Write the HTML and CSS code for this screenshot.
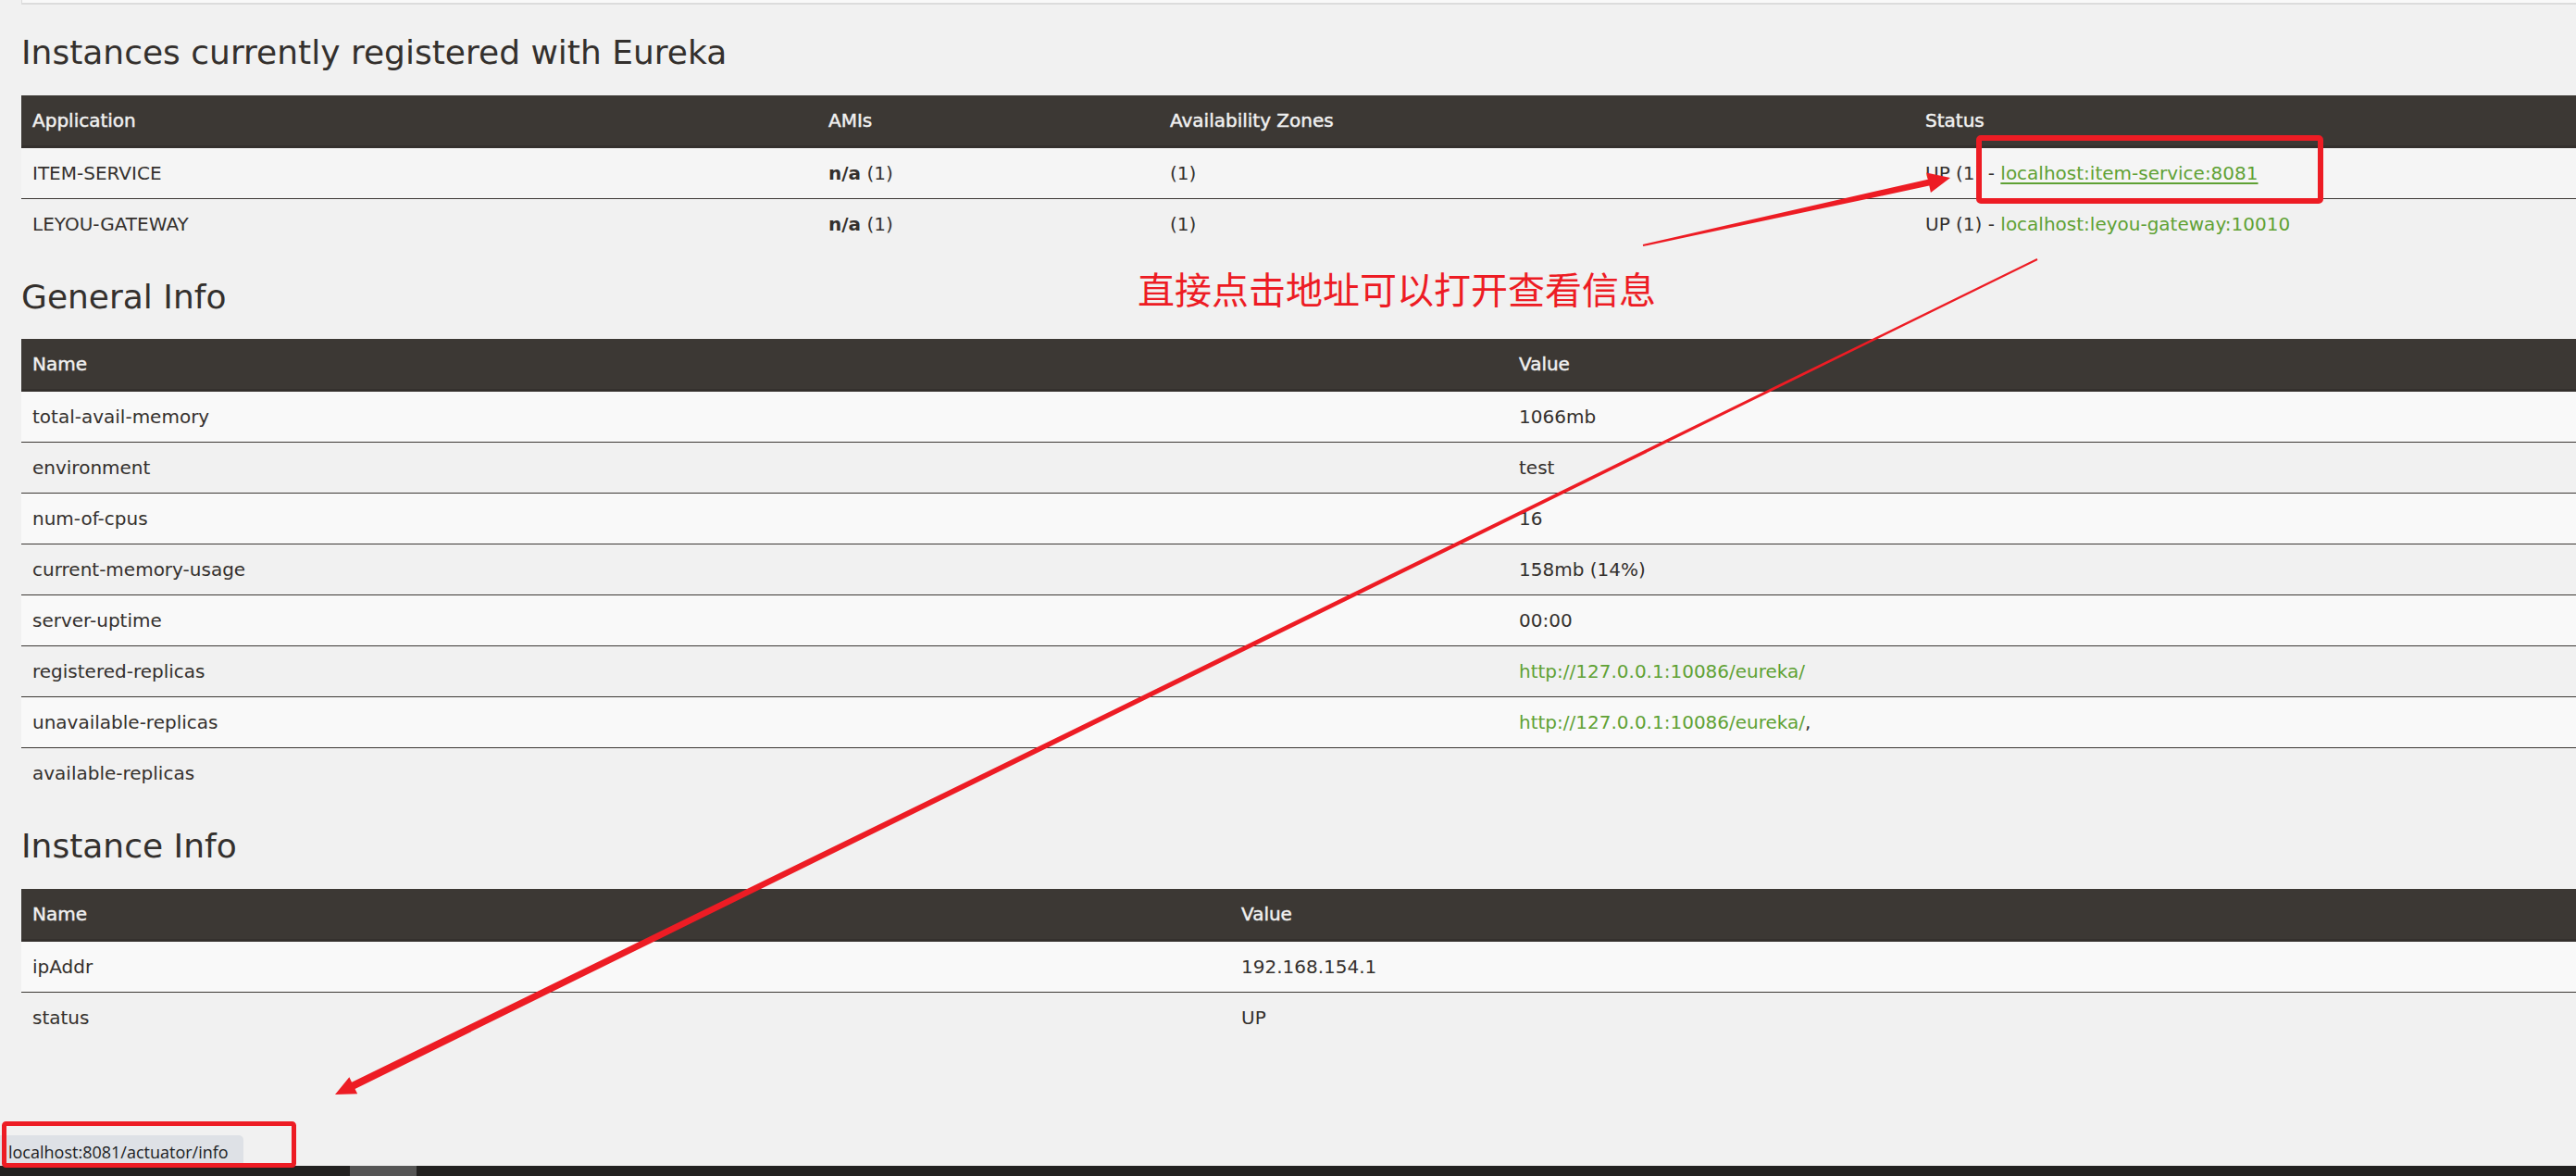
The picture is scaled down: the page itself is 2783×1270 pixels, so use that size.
FILE: index.html
```html
<!DOCTYPE html>
<html lang="en">
<head>
<meta charset="utf-8">
<title>Eureka</title>
<link rel="stylesheet" href="styles.css">
</head>
<body>
<div class="page">
  <div class="topbox"></div>

  <h2 class="section-title">Instances currently registered with Eureka</h2>
  <table class="grid">
    <colgroup>
      <col class="c-app"><col class="c-ami"><col class="c-zone"><col class="c-status">
    </colgroup>
    <thead>
      <tr><th>Application</th><th>AMIs</th><th>Availability Zones</th><th>Status</th></tr>
    </thead>
    <tbody>
      <tr class="hovered">
        <td>ITEM-SERVICE</td>
        <td><b>n/a</b> (1)</td>
        <td>(1)</td>
        <td>UP (1) - <a class="link underline" href="#">localhost:item-service:8081</a></td>
      </tr>
      <tr>
        <td>LEYOU-GATEWAY</td>
        <td><b>n/a</b> (1)</td>
        <td>(1)</td>
        <td>UP (1) - <a class="link" href="#">localhost:leyou-gateway:10010</a></td>
      </tr>
    </tbody>
  </table>

  <h2 class="section-title">General Info</h2>
  <table class="grid">
    <colgroup>
      <col class="c-gname"><col>
    </colgroup>
    <thead>
      <tr><th>Name</th><th>Value</th></tr>
    </thead>
    <tbody>
      <tr><td>total-avail-memory</td><td>1066mb</td></tr>
      <tr><td>environment</td><td>test</td></tr>
      <tr><td>num-of-cpus</td><td>16</td></tr>
      <tr><td>current-memory-usage</td><td>158mb (14%)</td></tr>
      <tr><td>server-uptime</td><td>00:00</td></tr>
      <tr><td>registered-replicas</td><td><a class="link" href="#">http://127.0.0.1:10086/eureka/</a></td></tr>
      <tr><td>unavailable-replicas</td><td><a class="link" href="#">http://127.0.0.1:10086/eureka/</a>,</td></tr>
      <tr><td>available-replicas</td><td></td></tr>
    </tbody>
  </table>

  <h2 class="section-title">Instance Info</h2>
  <table class="grid">
    <colgroup>
      <col class="c-iname"><col>
    </colgroup>
    <thead>
      <tr><th>Name</th><th>Value</th></tr>
    </thead>
    <tbody>
      <tr><td>ipAddr</td><td>192.168.154.1</td></tr>
      <tr><td>status</td><td>UP</td></tr>
    </tbody>
  </table>
</div>

<div class="annotation">直接点击地址可以打开查看信息</div>

<div class="status-bubble">localhost:8081/actuator/info</div>
<div class="hscroll"><div class="hscroll-thumb"></div></div>

<svg class="markup" width="2783" height="1270" viewBox="0 0 2783 1270" xmlns="http://www.w3.org/2000/svg">
  <rect x="2138" y="149" width="369" height="68" rx="2" fill="none" stroke="#ed1c24" stroke-width="6"/>
  <rect x="4.5" y="1213.5" width="313" height="45" rx="2" fill="none" stroke="#ed1c24" stroke-width="5"/>
  <polygon fill="#ed1c24" points="1774.8,264 2082.8,193.7 2081.2,186.4 2107,192 2085.9,207.9 2084.3,200.6 1775.2,266"/>
  <polygon fill="#ed1c24" points="2200.56,279.1 379.99,1168.72 377.35,1163.33 362,1182 386.15,1181.29 383.51,1175.9 2201.44,280.9"/>
</svg>
</body>
</html>
```

FILE: styles.css
```css
html, body {
  margin: 0;
  padding: 0;
}

body {
  position: relative;
  width: 2783px;
  height: 1270px;
  overflow: hidden;
  background: #f1f1f1;
  color: #34302d;
  font-family: "DejaVu Sans", sans-serif;
  font-size: 20px;
}

.page {
  padding-left: 23px;
}

.topbox {
  height: 3px;
  background: #f9f9f9;
  border-left: 1px solid #dcdcdc;
  border-bottom: 2px solid #dcdcdc;
}

.section-title {
  margin: 32px 0 25.5px;
  font-size: 36px;
  font-weight: normal;
  line-height: 40px;
  color: #34302d;
}

.grid {
  width: 100%;
  table-layout: fixed;
  border-collapse: separate;
  border-spacing: 0;
}

.grid th {
  padding: 15px 12px;
  line-height: 24px;
  text-align: left;
  font-weight: normal;
  color: #f1f1f1;
  -webkit-text-stroke: 0.45px #f1f1f1;
  background: #3c3834;
  border-bottom: 3px solid #34302d;
  white-space: nowrap;
}

.grid td {
  padding: 15px 12px;
  line-height: 24px;
  border-top: 1px solid #3c3834;
  white-space: nowrap;
}

.grid tbody tr:first-child td {
  border-top: none;
}

.grid tbody tr:nth-child(odd) {
  background: #f9f9f9;
}

.grid tbody tr:nth-child(even) {
  background: #f1f1f1;
}

.grid tbody tr.hovered {
  background: #f5f5f5;
}

.c-app { width: 860px; }
.c-ami { width: 369px; }
.c-zone { width: 816px; }
.c-gname { width: 1606px; }
.c-iname { width: 1306px; }

.link {
  color: #5fa134;
  text-decoration: none;
}

.link.underline {
  text-decoration: underline;
  text-underline-offset: 3px;
}

.annotation {
  position: absolute;
  left: 1229px;
  top: 291px;
  font-family: "Noto Sans CJK SC", sans-serif;
  font-size: 40px;
  line-height: 40px;
  color: #ed1c24;
  white-space: nowrap;
}

.status-bubble {
  position: absolute;
  left: 0;
  top: 1226px;
  box-sizing: border-box;
  width: 263px;
  height: 33px;
  padding: 4px 0 0 9px;
  background: #dee1e6;
  border-top-right-radius: 5px;
  font-family: "Open Sans", sans-serif;
  font-size: 18px;
  line-height: 28px;
  color: #202124;
  white-space: nowrap;
}

.hscroll {
  position: absolute;
  left: 0;
  top: 1259px;
  width: 2783px;
  height: 11px;
  background: #222120;
}

.hscroll-thumb {
  position: absolute;
  left: 378px;
  top: 0;
  width: 72px;
  height: 100%;
  background: #555555;
}

.markup {
  position: absolute;
  left: 0;
  top: 0;
  pointer-events: none;
}
```
